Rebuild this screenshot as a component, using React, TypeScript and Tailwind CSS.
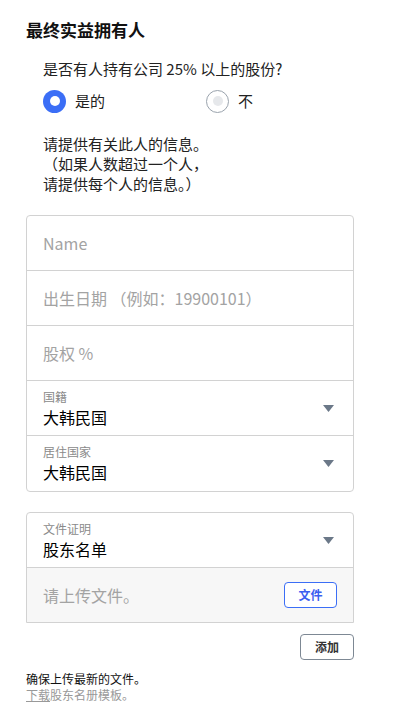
import { Fragment } from 'react';

const font = { fontFamily: '"Noto Sans CJK SC", "Noto Sans", sans-serif' };

function Caret() {
  return (
    <svg width="11" height="7" viewBox="0 0 11 7" className="shrink-0">
      <path d="M0 0 H11 L5.5 7 Z" fill="#6b7888" />
    </svg>
  );
}

function TextRow({ placeholder }: { placeholder: string }) {
  return (
    <div className="h-[55px] flex items-center px-4 text-[16px] text-[#a3a3a3] border-b border-[#d2d2d2]">
      {placeholder}
    </div>
  );
}

function SelectRow({ label, value, last }: { label: string; value: string; last?: boolean }) {
  return (
    <div
      className={`h-[55px] flex items-center justify-between pl-4 pr-[19px] ${
        last ? '' : 'border-b border-[#d2d2d2]'
      }`}
    >
      <div className="flex flex-col">
        <span className="text-[12px] leading-[16px] text-[#8a8a8a]">{label}</span>
        <span className="mt-[1px] text-[16px] leading-[22px] text-black">{value}</span>
      </div>
      <Caret />
    </div>
  );
}

export default function App() {
  return (
    <div className="bg-white w-[411px] min-h-[722px] pl-[26px] pt-[18px]" style={font}>
      <h2 className="text-[17px] leading-[24px] font-bold text-[#111]">最终实益拥有人</h2>

      <div className="pl-[17px] mt-[16px]">
        <p className="text-[15px] leading-[22px] text-[#222]">是否有人持有公司 25% 以上的股份?</p>

        <div className="flex items-center mt-[9px] h-[24px]">
          <div className="flex items-center w-[163px]">
            <span className="w-[23px] h-[23px] rounded-full bg-[#3b6ef6] flex items-center justify-center">
              <span className="w-[10px] h-[10px] rounded-full bg-white" />
            </span>
            <span className="ml-[9px] text-[15px] text-[#222]">是的</span>
          </div>
          <div className="flex items-center">
            <span className="w-[23px] h-[23px] rounded-full border border-[#9aa3ad] flex items-center justify-center">
              <span className="w-[10px] h-[10px] rounded-full bg-[#e6e8eb]" />
            </span>
            <span className="ml-[9px] text-[15px] text-[#222]">不</span>
          </div>
        </div>

        <p className="mt-[21px] text-[15px] leading-[20px] text-[#222]">
          {['请提供有关此人的信息。', '（如果人数超过一个人，', '请提供每个人的信息。）'].map((line, i) => (
            <Fragment key={i}>
              {line}
              <br />
            </Fragment>
          ))}
        </p>
      </div>

      <div className="mt-[21px] w-[328px] border border-[#d2d2d2] rounded-[4px] overflow-hidden">
        <TextRow placeholder="Name" />
        <TextRow placeholder="出生日期 （例如：19900101）" />
        <TextRow placeholder="股权 %" />
        <SelectRow label="国籍" value="大韩民国" />
        <SelectRow label="居住国家" value="大韩民国" last />
      </div>

      <div className="mt-[20px] w-[328px] border border-[#d2d2d2] rounded-t-[4px] overflow-hidden">
        <SelectRow label="文件证明" value="股东名单" />
        <div className="h-[54px] bg-[#f7f7f7] flex items-center justify-between pl-4 pr-[16px]">
          <span className="text-[16px] text-[#a3a3a3]">请上传文件。</span>
          <button className="w-[53px] h-[26px] rounded-[4px] border border-[#3b6ef6] bg-white text-[12px] font-bold text-[#3b5ef0]">
            文件
          </button>
        </div>
      </div>

      <div className="w-[328px] flex justify-end mt-[11px]">
        <button className="w-[54px] h-[26px] rounded-[4px] border border-[#7d8894] bg-white text-[12px] font-bold text-[#333]">
          添加
        </button>
      </div>

      <div className="mt-[11px] text-[12px] leading-[16px]">
        <p className="text-[#111]">确保上传最新的文件。</p>
        <p className="text-[#999]">
          <span className="underline">下载</span>股东名册模板。
        </p>
      </div>
    </div>
  );
}
